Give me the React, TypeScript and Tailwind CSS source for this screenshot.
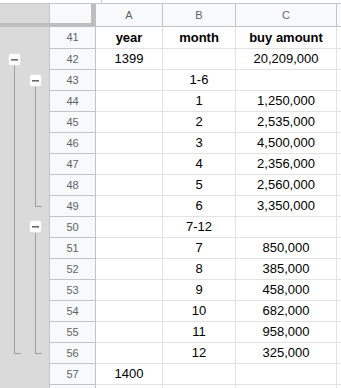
import React from "react";

type Row = { n: number; a?: string; b?: string; c?: string; bold?: boolean; hideNum?: boolean };

const rows: Row[] = [
  { n: 41, a: "year", b: "month", c: "buy amount", bold: true },
  { n: 42, a: "1399", c: "20,209,000" },
  { n: 43, b: "1-6" },
  { n: 44, b: "1", c: "1,250,000" },
  { n: 45, b: "2", c: "2,535,000" },
  { n: 46, b: "3", c: "4,500,000" },
  { n: 47, b: "4", c: "2,356,000" },
  { n: 48, b: "5", c: "2,560,000" },
  { n: 49, b: "6", c: "3,350,000" },
  { n: 50, b: "7-12" },
  { n: 51, b: "7", c: "850,000" },
  { n: 52, b: "8", c: "385,000" },
  { n: 53, b: "9", c: "458,000" },
  { n: 54, b: "10", c: "682,000" },
  { n: 55, b: "11", c: "958,000" },
  { n: 56, b: "12", c: "325,000" },
  { n: 57, a: "1400" },
  { n: 58, hideNum: true },
];

function GroupButton({ x, y }: { x: number; y: number }) {
  return (
    <g>
      <rect x={x + 0.5} y={y + 0.5} width={12} height={12} rx={2} fill="#ffffff" stroke="#d0d0d0" strokeWidth={0.5} />
      <rect x={x + 3} y={y + 6} width={7} height={1.6} fill="#6b6b6b" />
    </g>
  );
}

function GroupRail() {
  const stroke = "#9e9e9e";
  return (
    <svg width={49} height={361} className="block">
      <line x1={14.5} y1={38} x2={14.5} y2={326.5} stroke={stroke} strokeWidth={1} />
      <line x1={14} y1={326.5} x2={21} y2={326.5} stroke={stroke} strokeWidth={1} />
      <line x1={35.5} y1={59} x2={35.5} y2={179.5} stroke={stroke} strokeWidth={1} />
      <line x1={35} y1={179.5} x2={42} y2={179.5} stroke={stroke} strokeWidth={1} />
      <line x1={35.5} y1={206} x2={35.5} y2={326.5} stroke={stroke} strokeWidth={1} />
      <line x1={35} y1={326.5} x2={42} y2={326.5} stroke={stroke} strokeWidth={1} />
      <GroupButton x={8} y={26} />
      <GroupButton x={29} y={47} />
      <GroupButton x={29} y={193} />
    </svg>
  );
}

export default function App() {
  return (
    <div
      className="w-[341px] h-[388px] overflow-hidden bg-white text-black"
      style={{ fontFamily: '"Liberation Sans", Arial, sans-serif' }}
    >
      <div className="h-[4px] border-b border-[#c6c6c6] flex">
        <div className="ml-[101px] w-px h-[3px] bg-[#d0d0d0]" />
      </div>

      <div className="flex h-[23px]">
        <div className="w-[96px] flex flex-col shrink-0">
          <div className="flex h-[19px]">
            <div className="w-[50px] bg-[#dadada] border-r border-[#c4c4c4]" />
            <div className="w-[41px] bg-[#f8f9fa]" />
            <div className="w-[5px] bg-[#bebebe]" />
          </div>
          <div className="h-[4px] bg-[#bebebe]" />
        </div>
        {[
          { l: "A", w: "w-[67px]" },
          { l: "B", w: "w-[73px]" },
          { l: "C", w: "w-[101px]" },
        ].map((h) => (
          <div
            key={h.l}
            className={`${h.w} shrink-0 bg-[#f8f9fa] border-r border-b border-[#c4c4c4] flex items-center justify-center text-[11px] text-[#5f6368]`}
          >
            {h.l}
          </div>
        ))}
        <div className="flex-1 bg-[#f8f9fa] border-b border-[#c4c4c4]" />
      </div>

      <div className="flex">
        <div className="w-[50px] shrink-0 bg-[#dadada] border-r border-[#c4c4c4] h-[361px]">
          <GroupRail />
        </div>
        <div className="flex-1 flex flex-col">
          {rows.map((r, i) => (
            <div key={r.n} className={`flex ${i === 0 ? "h-[22px]" : "h-[21px]"} shrink-0`}>
              <div className="w-[46px] shrink-0 bg-[#f8f9fa] border-r border-b border-[#c4c4c4] flex items-center justify-center text-[11px] text-[#5f6368]">
                {r.hideNum ? "" : r.n}
              </div>
              <div
                className={`w-[67px] shrink-0 border-r border-b border-[#e2e2e2] flex items-center justify-center text-[13px] ${r.bold ? "font-bold" : ""}`}
              >
                {r.a}
              </div>
              <div
                className={`w-[73px] shrink-0 border-r border-b border-[#e2e2e2] flex items-center justify-center text-[13px] ${r.bold ? "font-bold" : ""}`}
              >
                {r.b}
              </div>
              <div
                className={`w-[101px] shrink-0 border-r border-b border-[#e2e2e2] flex items-center justify-center text-[13px] ${r.bold ? "font-bold" : ""}`}
              >
                {r.c}
              </div>
              <div className="flex-1 border-b border-[#e2e2e2]" />
            </div>
          ))}
        </div>
      </div>
    </div>
  );
}
